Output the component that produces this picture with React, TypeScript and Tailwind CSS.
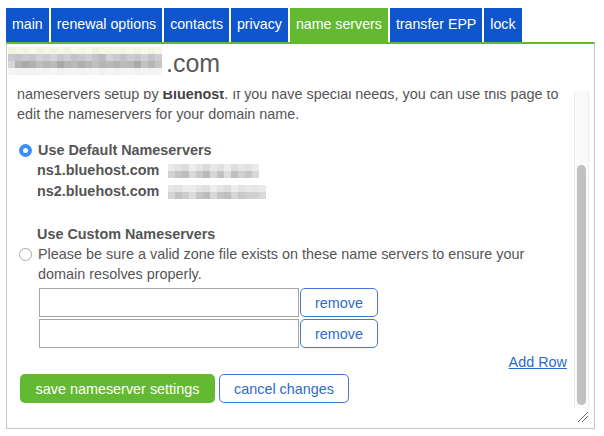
import React from "react";

const tabs = [
  "main",
  "renewal options",
  "contacts",
  "privacy",
  "name servers",
  "transfer EPP",
  "lock",
];

// pixelated "blur" block, rows of grey cells
const Pixels = ({ rows, cell }: { rows: string[][]; cell: string }) => (
  <div className="flex flex-col">
    {rows.map((row, i) => (
      <div key={i} className="flex">
        {row.map((c, j) => (
          <div key={j} className={cell} style={{ background: c }} />
        ))}
      </div>
    ))}
  </div>
);

const domainRows = [
  ["#eef5dc", "#f3f8e4", "#f1f6e0", "#f6f9ea", "#eef5dc", "#f3f7e6", "#f0f6de", "#f4f8e6", "#eff5de", "#f5f9e8", "#f2f7e2", "#f6f9ea", "#eef4dc", "#f3f7e4", "#f0f6e0", "#f4f8e8", "#eff5de", "#f3f8e4", "#f1f6e0", "#f5f8e8", "#f0f5de", "#f4f8e6"],
  ["#ccc8d2", "#c6c3cd", "#cbc8d3", "#c7c4cf", "#d2cfd9", "#cdcad4", "#d5d2dc", "#c9c6d1", "#cfccd6", "#c4c1cb", "#cac7d1", "#d0cdd7", "#c5c2cc", "#bdbac4", "#d3d0da", "#cbc8d2", "#c3c0ca", "#cecbd5", "#c8c5cf", "#d1ced8", "#c6c3cd", "#cfccd6"],
  ["#d6d6d4", "#b3b3b1", "#a9a9a7", "#b0b0ae", "#bdbdbb", "#b6b6b4", "#bbbbb9", "#a8a8a6", "#b4b4b2", "#b9b9b7", "#afafad", "#b7b7b5", "#c0c0be", "#b5b5b3", "#bababa", "#b2b2b0", "#bcbcba", "#b8b8b6", "#a9a9a7", "#c2c2c0", "#b6b6b4", "#c4c4c2"],
  ["#f6f6f6", "#f3f3f3", "#f4f4f4", "#f2f2f2", "#f5f5f5", "#f3f3f3", "#f6f6f6", "#f2f2f2", "#f4f4f4", "#f5f5f5", "#f3f3f3", "#f4f4f4", "#f6f6f6", "#f2f2f2", "#f5f5f5", "#f3f3f3", "#f4f4f4", "#f6f6f6", "#f2f2f2", "#f5f5f5", "#f3f3f3", "#f4f4f4"],
];

const ip1 = [
  ["#eaeaea", "#e2e2e2", "#dcdcdc", "#eeeeee", "#e4e4e4", "#dadada", "#e8e8e8", "#e0e0e0", "#ececec", "#dedede", "#e6e6e6", "#e2e2e2", "#eaeaea"],
  ["#d2d2d2", "#c4c4c4", "#bdbdbd", "#dadada", "#c8c8c8", "#bababa", "#d6d6d6", "#c2c2c2", "#dcdcdc", "#c0c0c0", "#cfcfcf", "#c6c6c6", "#d8d8d8"],
];
const ip2 = [
  ["#e6e6e6", "#e2e2e2", "#ebebeb", "#ececec", "#e4e4e4", "#e0e0e0", "#eeeeee", "#e4e4e4", "#dedede", "#ececec", "#e2e2e2", "#e8e8e8", "#e6e6e6", "#eaeaea"],
  ["#d4d4d4", "#c2c2c2", "#cccccc", "#dcdcdc", "#c6c6c6", "#bcbcbc", "#d8d8d8", "#c4c4c4", "#bfbfbf", "#d6d6d6", "#c8c8c8", "#cfcfcf", "#d0d0d0", "#dadada"],
];

const Radio = ({ checked }: { checked?: boolean }) =>
  checked ? (
    <span className="flex h-[13px] w-[13px] items-center justify-center rounded-full bg-[#3b8ff6]">
      <span className="h-[5px] w-[5px] rounded-full bg-white" />
    </span>
  ) : (
    <span className="block h-[13px] w-[13px] rounded-full border border-[#a9a9a9] bg-white" />
  );

const NsRow = () => (
  <div className="flex h-[29px] mb-[2px]">
    <div className="w-[260px] border border-[#a6a6a6] bg-white" />
    <button className="ml-[1px] w-[78px] rounded-[5px] border border-[#3f7bd6] bg-white text-[14.4px] text-[#2f6bc8]">
      remove
    </button>
  </div>
);

export default function App() {
  return (
    <div
      className="w-[604px] h-[436px] bg-white pt-[8px] pl-[6px]"
      style={{ fontFamily: '"Liberation Sans", Arial, sans-serif' }}
    >
      {/* tabs */}
      <div className="flex gap-[2px] h-[34px]">
        {tabs.map((t) => (
          <div
            key={t}
            className={
              "flex items-center px-[6px] text-[14.2px] text-white " +
              (t === "name servers" ? "bg-[#63b931]" : "bg-[#0f55cc]")
            }
          >
            {t}
          </div>
        ))}
      </div>

      <div className="w-[589px] h-[387px] border-t-2 border-t-[#63b931] border-x border-b border-[#c6c6c6] flex flex-col">
        {/* domain */}
        <div className="h-[47px] flex items-start pl-[1px] pt-[3px]">
          <Pixels rows={domainRows} cell="w-[7px] h-[7px]" />
          <span className="ml-[4px] mt-[2px] text-[25px] leading-[28px] text-[#5a5a5a]">
            .com
          </span>
        </div>

        {/* scroll area */}
        <div className="flex flex-1 min-h-0">
          <div className="flex-1 overflow-hidden pl-[10px] pr-[7px] text-[14.4px] leading-[20px] text-[#555]">
            <div className="-mt-[7px]">
              <p>
                nameservers setup by <b className="text-[#444]">Bluehost</b>. If you have
                special needs, you can use this page to
                <br />
                edit the nameservers for your domain name.
              </p>

              <div className="mt-[16px] flex items-center">
                <div className="ml-[2px] mr-[6px] flex">
                  <Radio checked />
                </div>
                <b className="text-[#555]">Use Default Nameservers</b>
              </div>
              <div className="pl-[20px] font-bold leading-[21px]">
                <div className="flex items-center">
                  <span className="w-[131px]">ns1.bluehost.com</span>
                  <Pixels rows={ip1} cell="w-[7px] h-[7px]" />
                </div>
                <div className="flex items-center">
                  <span className="w-[131px]">ns2.bluehost.com</span>
                  <Pixels rows={ip2} cell="w-[7px] h-[7px]" />
                </div>
              </div>

              <div className="mt-[22px] pl-[20px] font-bold">Use Custom Nameservers</div>
              <div className="flex">
                <div className="ml-[2px] mr-[6px] pt-[4px]">
                  <Radio />
                </div>
                <p>
                  Please be sure a valid zone file exists on these name servers to ensure your
                  <br />
                  domain resolves properly.
                </p>
              </div>

              <div className="mt-[4px] ml-[22px]">
                <NsRow />
                <NsRow />
              </div>

              <div className="mt-[4px] flex justify-end">
                <a className="text-[#2b6cc6] underline cursor-pointer">Add Row</a>
              </div>

              <div className="mt-[2px] ml-[3px] flex gap-[4px]">
                <button className="h-[29px] w-[195px] rounded-[5px] bg-[#63b931] text-[14.4px] text-white">
                  save nameserver settings
                </button>
                <button className="h-[29px] w-[130px] rounded-[5px] border border-[#3f7bd6] bg-white text-[14.4px] text-[#2f6bc8]">
                  cancel changes
                </button>
              </div>
            </div>
          </div>

          {/* scrollbar */}
          <div className="w-[15px] mr-[5px] flex flex-col">
            <div className="flex-1 border-x border-[#ececec] bg-[#fafafa] flex flex-col justify-end px-[2px] pb-[3px]">
              <div className="h-[240px] rounded-full bg-[#c1c1c1]" />
            </div>
            <div className="h-[20px] flex items-start justify-end pt-[3px]">
              <svg width="12" height="12" viewBox="0 0 12 12">
                <line x1="11" y1="1" x2="1" y2="11" stroke="#6b6b6b" strokeWidth="1" />
                <line x1="11" y1="5" x2="5" y2="11" stroke="#6b6b6b" strokeWidth="1" />
              </svg>
            </div>
          </div>
        </div>
      </div>
    </div>
  );
}
